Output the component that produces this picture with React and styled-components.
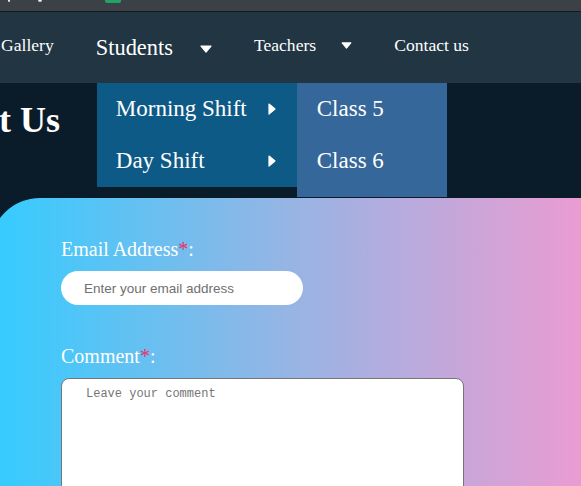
import React from 'react'
import styled, { createGlobalStyle } from 'styled-components'

const GlobalStyle = createGlobalStyle`
  html, body {
    margin: 0;
    padding: 0;
    background: #0a1c2a;
    overflow: hidden;
    font-family: 'Liberation Serif', 'Times New Roman', serif;
  }
`

const TopStrip = styled.div`
  display: flex;
  align-items: flex-start;
  height: 11px;
  background: #3c4147;
  border-bottom: 1px solid #15191d;
`
const StripMark = styled.span`
  display: block;
  width: ${props => props.w}px;
  height: ${props => props.h}px;
  margin-left: ${props => props.left}px;
  background: ${props => props.color};
  border-radius: 0 0 2px 2px;
`

const NavBar = styled.nav`
  display: flex;
  align-items: stretch;
  gap: 42px;
  height: 71px;
  padding-left: 1px;
  background: #213543;
`
const NavItem = styled.div`
  position: relative;
  display: flex;
  align-items: center;
  color: #ffffff;
  font-size: ${props => (props.active ? '22.4px' : '17.6px')};
  padding-bottom: ${props => (props.active ? '0' : '4px')};
  cursor: pointer;
`
const Caret = styled.svg`
  display: block;
  margin-left: ${props => props.gap}px;
  margin-top: ${props => (props.large ? '3px' : '0')};
`

const Dropdown = styled.div`
  position: absolute;
  top: 100%;
  left: 1px;
  width: 200px;
  background: #0e5a87;
  z-index: 5;
`
const DropRow = styled.div`
  position: relative;
  display: flex;
  align-items: center;
  justify-content: space-between;
  height: 52px;
  padding: 0 21px 0 19px;
  font-size: 23px;
  color: #ffffff;
`
const SubMenu = styled.div`
  position: absolute;
  top: 0;
  left: 100%;
  width: 150px;
  padding-bottom: 10px;
  background: #35679a;
`
const SubRow = styled.div`
  display: flex;
  align-items: center;
  height: 52px;
  padding-left: 20px;
  font-size: 23px;
  color: #ffffff;
`

const Heading = styled.h1`
  margin: 16px 0 0 -111px;
  font-size: 36px;
  font-weight: bold;
  color: #ffffff;
  white-space: nowrap;
`

const FormCard = styled.section`
  margin: 57px 0 0 -10px;
  width: calc(100% + 10px);
  min-height: 320px;
  padding: 40px 0 0 71px;
  box-sizing: border-box;
  border-top-left-radius: 50px;
  background: linear-gradient(to right, #33ccff 0%, #95b5e4 50%, #ea9cd2 100%);
`
const Field = styled.div`
  margin-bottom: 40px;
`
const Label = styled.label`
  display: block;
  margin-bottom: 10px;
  font-size: 20px;
  color: #ffffff;
`
const Required = styled.span`
  color: #e8306b;
`
const TextInput = styled.input`
  display: block;
  width: 242px;
  height: 34px;
  box-sizing: border-box;
  padding: 0 23px;
  border: none;
  border-radius: 17px;
  background: #ffffff;
  font-family: 'Liberation Sans', Arial, sans-serif;
  font-size: 13.5px;
  outline: none;
  &::placeholder {
    color: #707070;
  }
`
const TextArea = styled.textarea`
  display: block;
  width: 403px;
  height: 160px;
  box-sizing: border-box;
  padding: 8px 24px;
  border: 1px solid #767676;
  border-radius: 8px;
  background: #ffffff;
  font-family: 'Liberation Mono', 'Courier New', monospace;
  font-size: 12px;
  resize: none;
  outline: none;
  &::placeholder {
    color: #757575;
  }
`

const DownCaret = ({ gap, large }) => (
  <Caret gap={gap} large={large} width={large ? 12 : 11} height={large ? 8 : 7} viewBox='0 0 12 8'>
    <path d='M1 1 L11 1 L6 7 Z' fill='#ffffff' stroke='#ffffff' strokeWidth='1.2' strokeLinejoin='round' />
  </Caret>
)

const RightCaret = () => (
  <svg width='8' height='12' viewBox='0 0 8 12'>
    <path d='M1 1 L7 6 L1 11 Z' fill='#ffffff' stroke='#ffffff' strokeWidth='1.2' strokeLinejoin='round' />
  </svg>
)

const App = () => {
  return (
    <>
      <GlobalStyle />
      <TopStrip>
        <StripMark left={8} w={2} h={2} color='#e6e6e6' />
        <StripMark left={28} w={4} h={2} color='#e6e6e6' />
        <StripMark left={63} w={16} h={3} color='#1fa463' />
      </TopStrip>
      <NavBar>
        <NavItem>Gallery</NavItem>
        <NavItem active>
          Students
          <DownCaret gap={27} large />
          <Dropdown>
            <DropRow>
              Morning Shift
              <RightCaret />
              <SubMenu>
                <SubRow>Class 5</SubRow>
                <SubRow>Class 6</SubRow>
              </SubMenu>
            </DropRow>
            <DropRow>
              Day Shift
              <RightCaret />
            </DropRow>
          </Dropdown>
        </NavItem>
        <NavItem>
          Teachers
          <DownCaret gap={25} />
        </NavItem>
        <NavItem>Contact us</NavItem>
      </NavBar>
      <main>
        <Heading>Contact Us</Heading>
        <FormCard>
          <Field>
            <Label>Email Address<Required>*</Required>:</Label>
            <TextInput type='email' placeholder='Enter your email address' />
          </Field>
          <Field>
            <Label>Comment<Required>*</Required>:</Label>
            <TextArea placeholder='Leave your comment' />
          </Field>
        </FormCard>
      </main>
    </>
  )
}

export default App
